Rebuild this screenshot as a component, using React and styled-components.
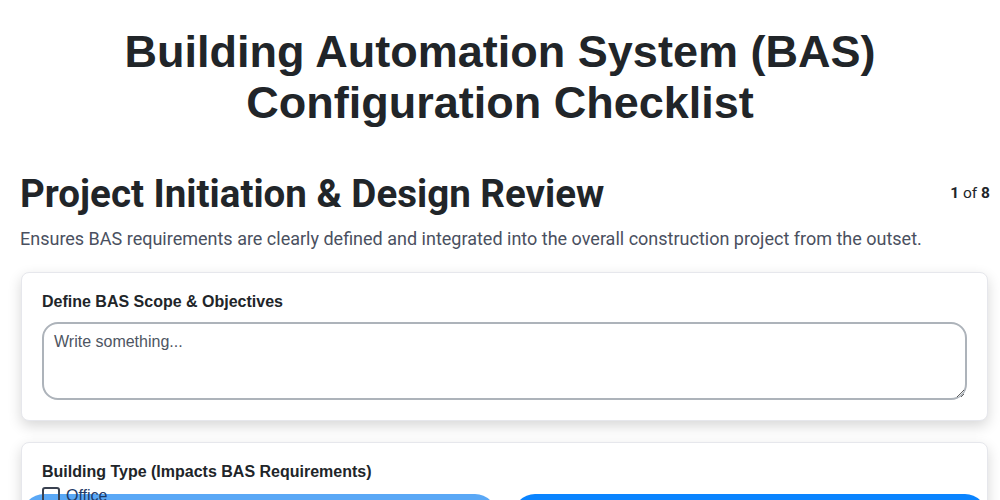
import styled, { createGlobalStyle } from "styled-components";

const GlobalStyle = createGlobalStyle`
  body {
    margin: 0;
    background: #ffffff;
    font-family: "Liberation Sans", Arial, sans-serif;
    color: #212529;
  }
`;

const Page = styled.div`
  padding: 0 10px 0 20px;
`;

const Title = styled.h1`
  margin: 0;
  padding-top: 26px;
  padding-right: 10px;
  text-align: center;
  font-size: 45px;
  line-height: 51px;
  font-weight: 700;
  color: #212529;
`;

const SectionHead = styled.div`
  display: flex;
  justify-content: space-between;
  align-items: flex-start;
  margin-top: 43px;
`;

const SectionTitle = styled.h2`
  margin: 0;
  font-family: Roboto, "Liberation Sans", sans-serif;
  font-size: 38.5px;
  line-height: 46px;
  font-weight: 700;
  color: #212529;
`;

const Counter = styled.div`
  font-family: Roboto, "Liberation Sans", sans-serif;
  font-size: 15.5px;
  margin-top: 13px;
  color: #212529;
  b {
    font-weight: 700;
  }
`;

const Description = styled.p`
  margin: 9px 0 21px;
  font-family: Roboto, "Liberation Sans", sans-serif;
  font-size: 18px;
  line-height: 25px;
  color: #4a5060;
`;

const Card = styled.div`
  background: #fff;
  border: 1px solid #e6e7ec;
  border-radius: 8px;
  box-shadow: 0 5px 14px rgba(0, 0, 0, 0.16);
  padding: 20px;
  margin: 0 2px 21px 1px;
`;

const Label = styled.div`
  font-size: 16px;
  line-height: 18px;
  font-weight: 700;
  color: #212529;
  margin-bottom: 11px;
`;

const TextArea = styled.textarea`
  display: block;
  box-sizing: border-box;
  width: 100%;
  height: 78px;
  border: 2px solid #adb3ba;
  border-radius: 16px;
  padding: 9px 10px;
  font-family: "Liberation Sans", Arial, sans-serif;
  font-size: 16px;
  color: #212529;
  resize: vertical;
  &::placeholder {
    color: #4e5562;
  }
`;

const Options = styled.div`
  position: relative;
  margin: 0 -20px;
`;

const CheckItem = styled.label`
  position: absolute;
  top: -5px;
  left: 20px;
  z-index: 2;
  display: flex;
  align-items: center;
  gap: 6px;
  font-size: 16px;
  color: #1f3a66;
`;

const Box = styled.span`
  width: 14px;
  height: 14px;
  border: 2px solid #3a4150;
  border-radius: 3px;
`;

const PillRow = styled.div`
  display: grid;
  grid-template-columns: 1fr 1fr;
  gap: 16px;
  padding-top: 2px;
`;

const Pill = styled.button`
  height: 44px;
  border: none;
  border-radius: 22px;
  background: ${(p) => (p.$light ? "#5aa8f6" : "#0a84ff")};
`;

export default function App() {
  return (
    <>
      <GlobalStyle />
      <Page>
        <Title>
          Building Automation System (BAS)
          <br />
          Configuration Checklist
        </Title>
        <SectionHead>
          <SectionTitle>Project Initiation &amp; Design Review</SectionTitle>
          <Counter>
            <b>1</b> of <b>8</b>
          </Counter>
        </SectionHead>
        <Description>
          Ensures BAS requirements are clearly defined and integrated into the overall
          construction project from the outset.
        </Description>
        <Card>
          <Label>Define BAS Scope &amp; Objectives</Label>
          <TextArea placeholder="Write something..." />
        </Card>
        <Card>
          <Label>Building Type (Impacts BAS Requirements)</Label>
          <Options>
            <CheckItem>
              <Box />
              Office
            </CheckItem>
            <PillRow>
              <Pill $light />
              <Pill />
            </PillRow>
          </Options>
        </Card>
      </Page>
    </>
  );
}
